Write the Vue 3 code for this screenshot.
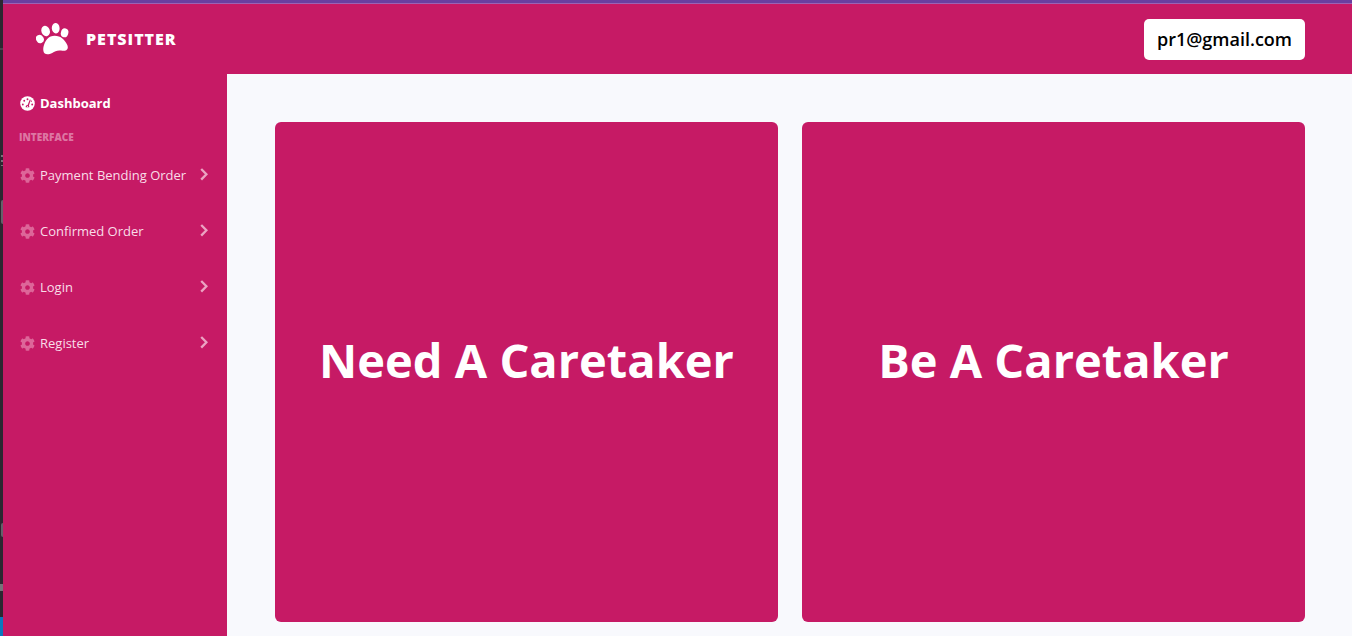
<script setup>
const menu = ['Payment Bending Order', 'Confirmed Order', 'Login', 'Register']
const cards = ['Need A Caretaker', 'Be A Caretaker']
</script>

<template>
  <div class="screen">
    <div class="edge" aria-hidden="true">
      <span class="mark speck"></span>
      <span class="mark dots"></span>
      <span class="mark thumb"></span>
      <span class="mark round"></span>
      <span class="mark dash"></span>
      <span class="mark status"></span>
    </div>
    <div class="page">
      <header class="topbar">
        <a class="brand" href="#">
          <svg class="paw" viewBox="0 0 33 32" aria-hidden="true">
            <ellipse cx="3.9" cy="16" rx="3.8" ry="4.3" transform="rotate(-28 3.9 16)" />
            <ellipse cx="9.6" cy="8" rx="4.2" ry="5.3" transform="rotate(-20 9.6 8)" />
            <ellipse cx="19.7" cy="5.2" rx="3.9" ry="5.2" transform="rotate(-4 19.7 5.2)" />
            <ellipse cx="28.6" cy="9.8" rx="3.7" ry="4.5" transform="rotate(14 28.6 9.8)" />
            <path d="M7.4 28C6.600 23.500 9.600 15.800 14.600 13.600C18.500 12 23.600 13 26.400 15.600C29.400 18.200 32.200 22.200 31.800 25C31.200 28 28 28.200 25 27.600C21.500 27 19 28.200 16.200 29.900C12.500 32 8 32 7.400 28Z" />
          </svg>
          <span class="name">PETSITTER</span>
        </a>
        <button class="account" type="button">pr1@gmail.com</button>
      </header>
      <div class="body">
        <nav class="sidebar">
          <a class="link active" href="#">
            <svg class="icon" viewBox="0 0 512 512" aria-hidden="true">
              <circle cx="256" cy="256" r="248" fill="currentColor" />
              <g class="cut">
                <circle cx="256" cy="112" r="32" />
                <circle cx="144" cy="160" r="32" />
                <circle cx="96" cy="288" r="32" />
                <circle cx="416" cy="288" r="32" />
                <path d="M332 128C340 116 370 124 362 146L305 322C316 340 322 360 316 384H196C184 336 220 296 260 304Z" />
                <circle cx="388" cy="176" r="22" />
              </g>
              <path d="M238 352a20 20 0 1 0 40 0a20 20 0 1 0-40 0" fill="currentColor" />
            </svg>
            <span>Dashboard</span>
          </a>
          <h2 class="heading">INTERFACE</h2>
          <a v-for="item in menu" :key="item" class="link" href="#">
            <svg class="icon cog" viewBox="0 0 512 512" aria-hidden="true">
              <path fill="currentColor" d="M487.4 315.7l-42.6-24.6c4.3-23.2 4.3-47 0-70.2l42.6-24.6c4.9-2.8 7.1-8.6 5.5-14-11.1-35.6-30-67.8-54.7-94.6-3.8-4.1-10-5.1-14.8-2.3L380.8 110c-17.9-15.4-38.500-27.300-60.800-35.100V25.800c0-5.600-3.900-10.500-9.400-11.700-36.700-8.200-74.300-7.800-109.200 0-5.500 1.200-9.400 6.100-9.400 11.700V75c-22.200 7.900-42.800 19.800-60.800 35.100L88.700 85.500c-4.900-2.800-11-1.900-14.800 2.300-24.700 26.700-43.600 58.900-54.700 94.600-1.700 5.400.6 11.200 5.500 14L67.300 221c-4.300 23.200-4.300 47 0 70.200l-42.600 24.600c-4.900 2.800-7.100 8.600-5.500 14 11.100 35.600 30 67.800 54.700 94.600 3.800 4.100 10 5.100 14.800 2.300l42.600-24.600c17.900 15.400 38.500 27.300 60.800 35.100v49.200c0 5.600 3.900 10.500 9.400 11.700 36.700 8.200 74.300 7.800 109.200 0 5.500-1.200 9.400-6.100 9.400-11.700v-49.200c22.200-7.900 42.800-19.800 60.800-35.100l42.600 24.600c4.900 2.800 11 1.900 14.800-2.300 24.700-26.700 43.600-58.900 54.700-94.600 1.500-5.500-.7-11.300-5.600-14.100zM256 336c-44.100 0-80-35.900-80-80s35.900-80 80-80 80 35.900 80 80-35.900 80-80 80z" />
            </svg>
            <span>{{ item }}</span>
            <svg class="arrow" viewBox="0 0 8 14" aria-hidden="true">
              <path d="M1.200 1L6.400 6.300L1.200 11.600" fill="none" stroke="currentColor" stroke-width="2.300" />
            </svg>
          </a>
        </nav>
        <main class="content">
          <a v-for="card in cards" :key="card" class="card" href="#">{{ card }}</a>
        </main>
      </div>
    </div>
  </div>
</template>

<style>
body {
  margin: 0;
}
</style>

<style scoped>
.screen {
  --pink: #c61a65;
  display: flex;
  box-sizing: border-box;
  min-height: 100vh;
  font-family: "Open Sans", "Noto Sans", sans-serif;
  background: #f8f9fd;
}

.screen a {
  text-decoration: none;
}

.edge {
  position: relative;
  flex: none;
  width: 3px;
  background: #2d2730;
  overflow: hidden;
}

.mark {
  position: absolute;
  right: 0;
  width: 3px;
  background: #65616a;
}

.speck {
  top: 48px;
  height: 2px;
  background: #49434c;
}

.dots {
  top: 155px;
  width: 2px;
  height: 11px;
  background: repeating-linear-gradient(#77737a 0 2px, transparent 2px 5px);
}

.thumb {
  top: 200px;
  height: 24px;
  width: 2px;
  border-radius: 2px 0 0 2px;
}

.round {
  top: 523px;
  width: 2px;
  height: 14px;
  border-radius: 2px 0 0 2px;
}

.dash {
  top: 584px;
  height: 7px;
  background: #77737a;
}

.status {
  top: 617px;
  bottom: 0;
  background: #0a78bd;
}

.page {
  display: flex;
  flex: 1;
  flex-direction: column;
  min-width: 0;
}

.topbar {
  display: flex;
  align-items: center;
  justify-content: space-between;
  padding: 15px 47px 14px 33px;
  border-top: 1px solid #9c62b4;
  box-shadow: 0 -3px #6a3fa0;
  margin-top: 3px;
  background: var(--pink);
}

.brand {
  display: flex;
  align-items: center;
  gap: 17px;
  padding-bottom: 2px;
  color: #fff;
}

.paw {
  width: 33px;
  height: 32px;
  fill: currentColor;
}

.name {
  font-size: 16px;
  font-weight: 800;
  line-height: 24px;
  letter-spacing: 1px;
}

.account {
  padding: 8px 13px;
  border: 0;
  border-radius: 5px;
  background: #fff;
  color: #000;
  font: inherit;
  font-size: 18px;
  font-weight: 600;
  line-height: 25px;
}

.body {
  display: flex;
  flex: 1;
}

.sidebar {
  flex: none;
  box-sizing: border-box;
  width: 224px;
  background: var(--pink);
}

.link {
  display: flex;
  align-items: center;
  gap: 5px;
  padding: 18px 19px 18px 17px;
  color: #f9dde8;
  font-size: 13px;
  line-height: 20px;
  white-space: nowrap;
}

.link.active {
  padding: 19px 19px 16px 17px;
  color: #fff;
  font-weight: 700;
}

.icon {
  width: 15px;
  height: 15px;
}

.cut {
  fill: var(--pink);
}

.cog {
  color: #dd6699;
}

.arrow {
  width: 8px;
  height: 14px;
  margin-left: auto;
  color: #eba3c2;
}

.heading {
  margin: 0;
  padding: 0 16px 2px;
  color: #dd76a3;
  font-size: 10px;
  font-weight: 800;
  line-height: 16px;
}

.content {
  display: grid;
  flex: 1;
  grid-template-columns: 1fr 1fr;
  gap: 24px;
  padding: 48px 47px 14px 48px;
}

.card {
  display: flex;
  align-items: center;
  justify-content: center;
  padding: 0 16px 24px;
  border-radius: 6px;
  background: var(--pink);
  color: #fff;
  font-size: 47px;
  font-weight: 700;
  line-height: 58px;
}
</style>
